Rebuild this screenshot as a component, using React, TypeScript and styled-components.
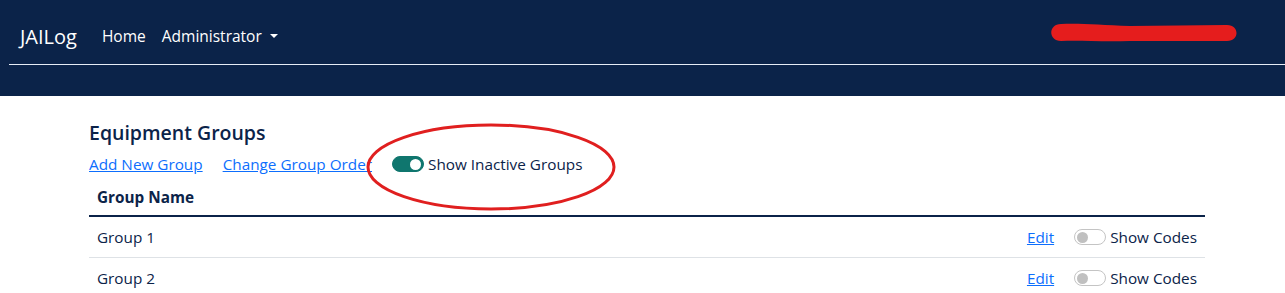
import React, { useState } from "react";
import styled, { createGlobalStyle } from "styled-components";

const GlobalStyle = createGlobalStyle`
  body {
    margin: 0;
    background: #fff;
    font-family: "Open Sans", "Noto Sans", sans-serif;
  }
`;

const NAVY = "#0b2349";

type Group = { id: number; name: string };

const groups: Group[] = [
  { id: 1, name: "Group 1" },
  { id: 2, name: "Group 2" },
];

const Toggle = ({ on, onChange }: { on: boolean; onChange: () => void }) => (
  <Switch $on={on} onClick={onChange}>
    <Knob $on={on} />
  </Switch>
);

export default function App() {
  const [showInactive, setShowInactive] = useState(true);
  const [codes, setCodes] = useState<Record<number, boolean>>({});

  return (
    <>
      <GlobalStyle />
      <Header>
        <NavBar>
          <Brand>JAILog</Brand>
          <NavLink>Home</NavLink>
          <NavLink>
            Administrator <Caret />
          </NavLink>
          <Spacer />
          {/* user name scribbled out */}
          <Redaction viewBox="0 0 188 22" width="188" height="22">
            <path
              d="M11 2 C 30 1, 50 3, 80 4 L 176 3 C 190 2, 190 20, 176 19 L 80 19 C 50 20, 30 18, 11 19 C -2 19, -2 2, 11 2 Z"
              fill="#e51d1d"
            />
          </Redaction>
        </NavBar>
        <Rule />
      </Header>

      <Main>
        <Title>Equipment Groups</Title>
        <Actions>
          <TextLink href="#">Add New Group</TextLink>
          <TextLink href="#">Change Group Order</TextLink>
          <ToggleLabel>
            <Toggle on={showInactive} onChange={() => setShowInactive(!showInactive)} />
            Show Inactive Groups
          </ToggleLabel>
          <Circle viewBox="0 0 252 90" width="252" height="90">
            <ellipse cx="126" cy="45" rx="123" ry="42" fill="none" stroke="#e01f1f" strokeWidth="3" />
          </Circle>
        </Actions>
        <Table>
          <HeadRow>
            <HeadCell>Group Name</HeadCell>
          </HeadRow>
          {groups.map((g) => (
            <Row key={g.id}>
              <Cell>{g.name}</Cell>
              <RowTools>
                <TextLink href="#">Edit</TextLink>
                <ToggleLabel>
                  <Toggle
                    on={!!codes[g.id]}
                    onChange={() => setCodes({ ...codes, [g.id]: !codes[g.id] })}
                  />
                  Show Codes
                </ToggleLabel>
              </RowTools>
            </Row>
          ))}
        </Table>
      </Main>
    </>
  );
}

const Header = styled.header`
  background: ${NAVY};
  height: 96px;
  padding-left: 9px;
`;

const NavBar = styled.nav`
  box-sizing: border-box;
  display: flex;
  align-items: center;
  height: 64px;
  padding: 8px 47px 0 11px;
  color: #fff;
`;

const Brand = styled.span`
  font-size: 20px;
  margin-right: 25px;
  margin-top: 1px;
`;

const NavLink = styled.span`
  font-size: 15.5px;
  margin-right: 16px;
  display: flex;
  align-items: center;
`;

const Caret = styled.span`
  display: inline-block;
  margin-left: 8px;
  border-top: 4px solid #fff;
  border-left: 4px solid transparent;
  border-right: 4px solid transparent;
`;

const Spacer = styled.div`
  flex: 1;
`;

const Redaction = styled.svg`
  display: block;
  margin-top: -6px;
`;

const Rule = styled.div`
  height: 1px;
  background: #e6ecf5;
`;

const Main = styled.main`
  width: 1116px;
  padding: 24px 0 0 89px;
  color: ${NAVY};
`;

const Title = styled.h2`
  margin: 0;
  font-size: 19.5px;
  font-weight: 600;
  line-height: 26px;
`;

const Actions = styled.div`
  position: relative;
  display: flex;
  align-items: center;
  gap: 20px;
  height: 30px;
  margin-top: 3px;
  font-size: 15.3px;
`;

const Circle = styled.svg`
  position: absolute;
  left: 276px;
  top: -27px;
`;

const TextLink = styled.a`
  color: #0d6efd;
  text-decoration: underline;
`;

const ToggleLabel = styled.label`
  display: flex;
  align-items: center;
  gap: 4px;
  color: ${NAVY};
`;

const Switch = styled.span<{ $on: boolean }>`
  display: inline-flex;
  align-items: center;
  box-sizing: border-box;
  width: 32px;
  height: 16px;
  border-radius: 8px;
  padding: 0 2px;
  justify-content: ${(p) => (p.$on ? "flex-end" : "flex-start")};
  background: ${(p) => (p.$on ? "#0f766e" : "#fff")};
  border: 1px solid ${(p) => (p.$on ? "#0f766e" : "#c4c4c4")};
  cursor: pointer;
`;

const Knob = styled.span<{ $on: boolean }>`
  width: 11px;
  height: 11px;
  border-radius: 50%;
  background: ${(p) => (p.$on ? "#fff" : "#c0c0c0")};
`;

const Table = styled.div`
  font-size: 15.3px;
`;

const HeadRow = styled.div`
  display: flex;
  align-items: center;
  height: 36px;
  border-bottom: 2px solid ${NAVY};
`;

const HeadCell = styled.div`
  padding: 0 8px;
  font-weight: 700;
`;

const Row = styled.div`
  display: flex;
  align-items: center;
  justify-content: space-between;
  height: 40px;
  border-bottom: 1px solid #dee2e6;
`;

const Cell = styled.div`
  padding: 0 8px;
`;

const RowTools = styled.div`
  display: flex;
  align-items: center;
  gap: 20px;
  padding-right: 8px;
`;
